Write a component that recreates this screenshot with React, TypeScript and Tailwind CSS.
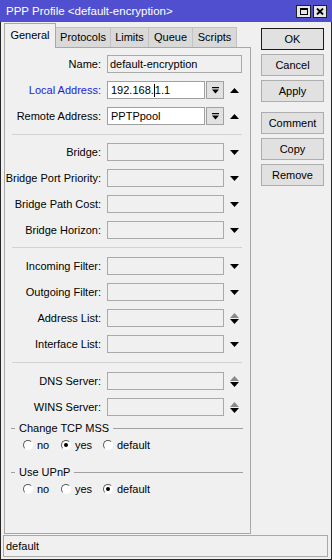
import React from "react";

const DownTri = () => (
  <svg width="9" height="5" viewBox="0 0 9 5"><path d="M0 0H9L4.5 5Z" fill="#000" /></svg>
);
const UpTri = () => (
  <svg width="9" height="5" viewBox="0 0 9 5"><path d="M0 5H9L4.5 0Z" fill="#000" /></svg>
);
const Spin = () => (
  <svg width="9" height="11" viewBox="0 0 9 11">
    <path d="M0 5H9L4.5 0Z" fill="#8a8a8a" />
    <path d="M0 6H9L4.5 11Z" fill="#000" />
  </svg>
);
const DropIcon = () => (
  <svg width="7" height="7" viewBox="0 0 7 7">
    <rect x="0" y="0" width="7" height="1.2" fill="#000" />
    <path d="M0 2.4H7L3.5 6.6Z" fill="#000" />
  </svg>
);

type Trail = "down" | "spin" | "none";

function Row({ label, trail = "down", blue = false }: { label: string; trail?: Trail; blue?: boolean }) {
  return (
    <div className="flex items-center h-[18px]">
      <div className={`w-[96px] text-right whitespace-nowrap ${blue ? "text-[#1a1ae6]" : "text-black"}`}>{label}</div>
      <div className="ml-[6px] w-[117px] h-[18px] border border-[#a9a9a9] bg-[#f0f0f0]" />
      <div className="w-[20px] flex justify-center pl-[1px]">
        {trail === "down" && <DownTri />}
        {trail === "spin" && <Spin />}
      </div>
    </div>
  );
}

function ComboRow({ label, value, caret = false, blue = false }: { label: string; value: React.ReactNode; caret?: boolean; blue?: boolean }) {
  return (
    <div className="flex items-center h-[18px]">
      <div className={`w-[96px] text-right whitespace-nowrap ${blue ? "text-[#1a1ae6]" : "text-black"}`}>{label}</div>
      <div className="ml-[6px] w-[98px] h-[18px] border border-[#a0a0a0] bg-white flex items-center pl-[3px] text-black">
        {value}
      </div>
      <div className="ml-[1px] w-[18px] h-[18px] border border-[#a0a0a0] bg-[#e1e1e1] flex items-center justify-center">
        <DropIcon />
      </div>
      <div className="w-[20px] flex justify-center pl-[1px]">
        <UpTri />
      </div>
    </div>
  );
}

function Sep({ mt, mb }: { mt: string; mb: string }) {
  return <div className={`${mt} ${mb} ml-[7px] w-[230px] h-px bg-[#d2d2d2]`} />;
}

function Radio({ checked }: { checked?: boolean }) {
  return (
    <div className="w-[10px] h-[10px] rounded-full border border-t-[#5a5a5a] border-l-[#5a5a5a] border-r-white border-b-white bg-white flex items-center justify-center">
      {checked && <div className="w-[4px] h-[4px] rounded-full bg-black" />}
    </div>
  );
}

function RadioRow({ sel, mt }: { sel: number; mt: string }) {
  const items = ["no", "yes", "default"];
  const widths = ["w-[38px]", "w-[42px]", "w-[60px]"];
  return (
    <div className={`${mt} flex items-center h-[12px] pl-[18px]`}>
      {items.map((t, i) => (
        <div key={t} className={`flex items-center ${widths[i]}`}>
          <Radio checked={sel === i} />
          <span className="ml-[4px]">{t}</span>
        </div>
      ))}
    </div>
  );
}

function GroupHeader({ title, mt }: { title: string; mt: string }) {
  return (
    <div className={`${mt} flex items-center h-[12px] ml-[6px] mr-[7px]`}>
      <div className="w-[4px] h-px bg-[#a0a0a0]" />
      <span className="ml-[4px] whitespace-nowrap">{title}</span>
      <div className="ml-[4px] flex-1 h-px bg-[#a0a0a0]" />
    </div>
  );
}

function Btn({ label, primary, mt }: { label: string; primary?: boolean; mt?: string }) {
  return (
    <div
      className={`${mt ?? ""} w-[63px] h-[22px] flex items-center justify-center bg-[#e1e1e1] border ${
        primary ? "border-[#1a1a1a]" : "border-[#adadad]"
      } text-black`}
    >
      {label}
    </div>
  );
}

export default function App() {
  return (
    <div className="w-[332px] h-[560px] flex flex-col bg-[#f0f0f0] font-['Liberation_Sans',Arial,sans-serif] text-[11px] leading-none select-none overflow-hidden">
      {/* title bar */}
      <div className="h-[22px] bg-[#4f4fd0] flex items-center pl-[6px] pr-[5px] pt-[3px] text-white text-[11.5px]">
        <span className="flex-1 whitespace-nowrap -mt-[1px]">PPP Profile &lt;default-encryption&gt;</span>
        <div className="flex items-center gap-[2px] -mt-[3px] pt-[1px]">
          <div className="w-[15px] h-[13px] bg-[#e6e6e6] border border-[#202020] flex items-center justify-center">
            <div className="w-[8px] h-[7px] border border-black border-t-2" />
          </div>
          <div className="w-[14px] h-[13px] bg-[#e6e6e6] border border-[#202020] flex items-center justify-center">
            <svg width="8" height="7" viewBox="0 0 8 7">
              <path d="M1 0.5L7 6.5M7 0.5L1 6.5" stroke="#000" strokeWidth="1.8" />
            </svg>
          </div>
        </div>
      </div>

      {/* body */}
      <div className="flex-1 flex flex-col border-x border-b border-[#262626]">
        <div className="flex pt-[1px]">
          {/* left: tabs + panel */}
          <div className="ml-[3px] w-[247px] flex flex-col">
            <div className="h-[24px] flex items-end">
              <div className="relative z-10 -mb-px h-[25px] w-[52px] bg-[#f0f0f0] border-x border-t border-[#a8a8a8] flex items-center justify-center pb-[1px]">
                General
              </div>
              <div className="h-[20px] w-[55px] bg-[#d9d9d9] border-t border-r border-[#c2c2c2] flex items-center justify-center">
                Protocols
              </div>
              <div className="h-[20px] w-[38px] bg-[#d9d9d9] border-t border-r border-[#c2c2c2] flex items-center justify-center">
                Limits
              </div>
              <div className="h-[20px] w-[44px] bg-[#d9d9d9] border-t border-r border-[#c2c2c2] flex items-center justify-center">
                Queue
              </div>
              <div className="h-[20px] w-[44px] bg-[#d9d9d9] border-t border-r border-[#c2c2c2] flex items-center justify-center">
                Scripts
              </div>
            </div>
            <div className="h-[487px] border border-[#a8a8a8] bg-[#f0f0f0] flex flex-col pt-[7px]">
              <div className="flex flex-col gap-[8px]">
                <div className="flex items-center h-[18px]">
                  <div className="w-[96px] text-right">Name:</div>
                  <div className="ml-[6px] w-[135px] h-[18px] border border-[#a9a9a9] bg-[#f0f0f0] flex items-center pl-[2px]">
                    default-encryption
                  </div>
                </div>
                <ComboRow
                  label="Local Address:"
                  blue
                  value={
                    <span className="flex items-center">
                      192.168.<span className="inline-block w-px h-[13px] bg-black" />1.1
                    </span>
                  }
                />
                <ComboRow label="Remote Address:" value="PPTPpool" />
              </div>
              <Sep mt="mt-[9px]" mb="mb-[8px]" />
              <div className="flex flex-col gap-[8px]">
                <Row label="Bridge:" />
                <Row label="Bridge Port Priority:" />
                <Row label="Bridge Path Cost:" />
                <Row label="Bridge Horizon:" />
              </div>
              <Sep mt="mt-[8px]" mb="mb-[9px]" />
              <div className="flex flex-col gap-[8px]">
                <Row label="Incoming Filter:" />
                <Row label="Outgoing Filter:" />
                <Row label="Address List:" trail="spin" />
                <Row label="Interface List:" />
              </div>
              <Sep mt="mt-[9px]" mb="mb-[9px]" />
              <div className="flex flex-col gap-[8px]">
                <Row label="DNS Server:" trail="spin" />
                <Row label="WINS Server:" trail="spin" />
              </div>
              <GroupHeader title="Change TCP MSS" mt="mt-[6px]" />
              <RadioRow sel={1} mt="mt-[5px]" />
              <GroupHeader title="Use UPnP" mt="mt-[15px]" />
              <RadioRow sel={2} mt="mt-[5px]" />
            </div>
          </div>

          {/* right buttons */}
          <div className="ml-[10px] w-[63px] flex flex-col pt-[5px]">
            <Btn label="OK" primary />
            <Btn label="Cancel" mt="mt-[4px]" />
            <Btn label="Apply" mt="mt-[4px]" />
            <Btn label="Comment" mt="mt-[10px]" />
            <Btn label="Copy" mt="mt-[4px]" />
            <Btn label="Remove" mt="mt-[4px]" />
          </div>
        </div>

        {/* status bar */}
        <div className="mt-[1px] ml-[2px] mr-[3px] h-[22px] border border-[#a9a9a9] flex items-center pl-[2px]">
          default
        </div>
      </div>
    </div>
  );
}
